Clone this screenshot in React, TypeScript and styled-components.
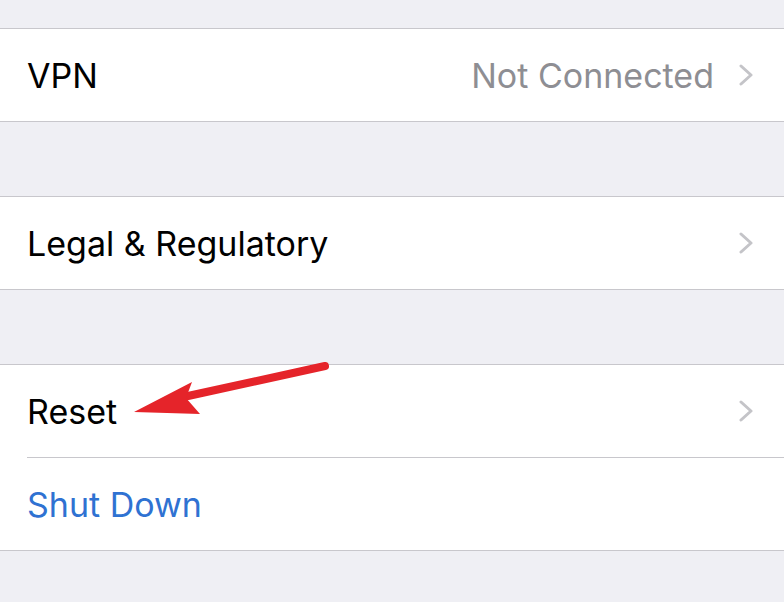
import React from "react";
import styled, { createGlobalStyle } from "styled-components";

const Global = createGlobalStyle`
  html, body { margin: 0; padding: 0; background: #efeff4; }
  body { font-family: Inter, "Noto Sans", sans-serif; -webkit-font-smoothing: antialiased; }
`;

const Page = styled.div`
  position: relative;
  width: 784px;
  height: 602px;
  overflow: hidden;
  background: #efeff4;
  display: flex;
  flex-direction: column;
`;

const Spacer = styled.div<{ $h: number }>`
  height: ${(p) => p.$h}px;
  flex: none;
`;

const Group = styled.div`
  background: #fff;
  border-top: 1px solid #c8c7cc;
  border-bottom: 1px solid #c8c7cc;
  display: flex;
  flex-direction: column;
`;

const Row = styled.div<{ $divider?: boolean }>`
  height: 92px;
  display: flex;
  align-items: center;
  padding: 0 30px 0 27px;
  position: relative;
  ${(p) =>
    p.$divider
      ? `&::after { content: ""; position: absolute; left: 27px; right: 0; bottom: -1px; height: 1px; background: #c8c7cc; }
         margin-bottom: 1px;`
      : ""}
`;

const Label = styled.span<{ $blue?: boolean }>`
  flex: 1;
  font-size: 34px;
  color: ${(p) => (p.$blue ? "#2f72d2" : "#000")};
`;

const Value = styled.span`
  font-size: 34px;
  color: #8e8e93;
  margin-right: 24px;
`;

const ChevronSvg = styled.svg`
  width: 16px;
  height: 22px;
  flex: none;
`;

const Chevron = () => (
  <ChevronSvg viewBox="0 0 16 22">
    <path d="M3 2 L13 11 L3 20" fill="none" stroke="#c4c4c8" strokeWidth="3" strokeLinecap="round" strokeLinejoin="round" />
  </ChevronSvg>
);

const ArrowSvg = styled.svg`
  position: absolute;
  left: 0;
  top: 0;
  pointer-events: none;
`;

export default function App() {
  return (
    <Page>
      <Global />
      <Spacer $h={28} />
      <Group>
        <Row>
          <Label>VPN</Label>
          <Value>Not Connected</Value>
          <Chevron />
        </Row>
      </Group>
      <Spacer $h={74} />
      <Group>
        <Row>
          <Label>Legal &amp; Regulatory</Label>
          <Chevron />
        </Row>
      </Group>
      <Spacer $h={74} />
      <Group>
        <Row $divider>
          <Label>Reset</Label>
          <Chevron />
        </Row>
        <Row>
          <Label $blue>Shut Down</Label>
        </Row>
      </Group>
      <ArrowSvg width="784" height="602" viewBox="0 0 784 602">
        <path d="M325 366 L188 396" stroke="#e5242a" strokeWidth="8" strokeLinecap="round" fill="none" />
        <polygon points="134,412 192,382 186,398 200,414" fill="#e5242a" />
      </ArrowSvg>
    </Page>
  );
}
